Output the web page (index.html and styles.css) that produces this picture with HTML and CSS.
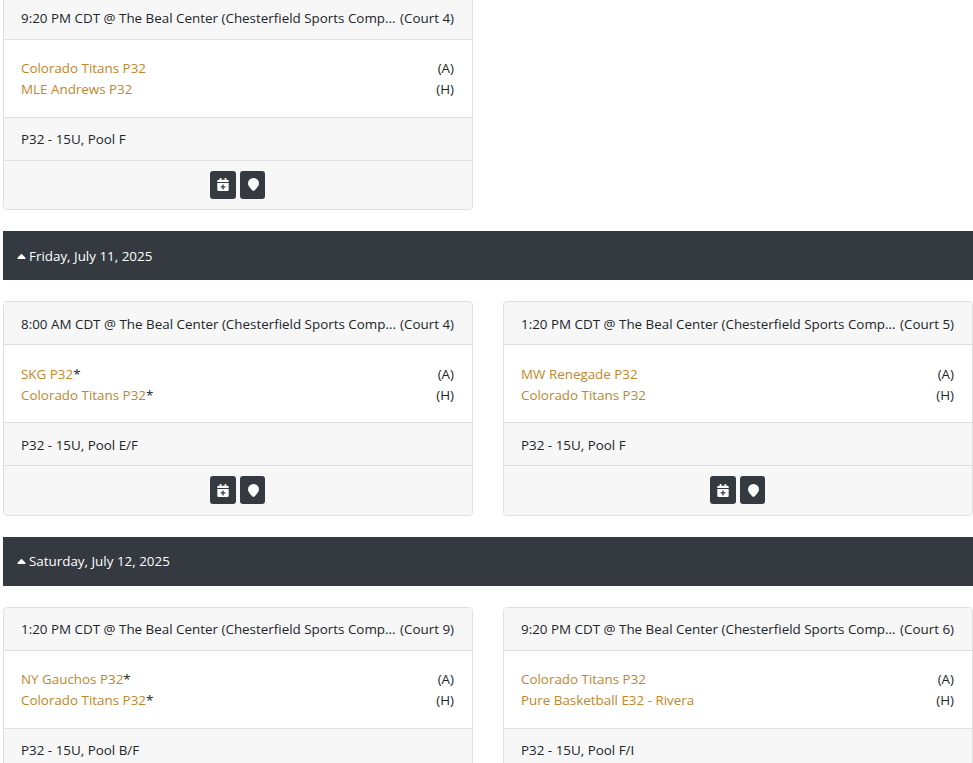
FILE: index.html
```html
<!DOCTYPE html>
<html lang="en">
<head>
<meta charset="utf-8">
<title>Schedule</title>
<link rel="stylesheet" href="styles.css">
</head>
<body>
<svg class="sprites" width="0" height="0" aria-hidden="true">
  <symbol id="cal" viewBox="0 0 14 16">
    <path d="M3 0h2v2h4V0h2v2h1.500A1.500 1.500 0 0 1 14 3.500V5H0V3.500A1.500 1.500 0 0 1 1.500 2H3z"/>
    <path fill-rule="evenodd" d="M0 6h14v8.500a1.500 1.500 0 0 1-1.500 1.500h-11A1.500 1.500 0 0 1 0 14.500zM6.200 8v2.200H4v1.600h2.200V14h1.600v-2.200H10v-1.600H7.800V8z"/>
  </symbol>
  <symbol id="pin" viewBox="0 0 11 13">
    <path d="M5.500 0A5.500 5.500 0 0 1 11 5.500c0 2.600-3.300 5.900-5 7.300a.8.8 0 0 1-1 0C3.300 11.400 0 8.100 0 5.500A5.500 5.500 0 0 1 5.500 0z"/>
  </symbol>
  <symbol id="caret" viewBox="0 0 10 6">
    <path d="M4.300.4.300 4.400C-.2 5 .1 6 1 6h8c.9 0 1.200-1 .7-1.600l-4-4a1 1 0 0 0-1.400 0z"/>
  </symbol>
</svg>
<main class="page">
  <div class="games">
    <article class="card">
      <header class="card-head"><span>9:20 PM CDT @ The Beal Center (Chesterfield Sports Comp...</span><span>(Court 4)</span></header>
      <div class="card-body">
        <div class="team"><a class="team-link">Colorado Titans P32</a><span>(A)</span></div>
        <div class="team"><a class="team-link">MLE Andrews P32</a><span>(H)</span></div>
      </div>
      <div class="card-foot">P32 - 15U, Pool F</div>
      <div class="card-actions">
        <button class="btn"><svg class="ico"><use href="#cal"/></svg></button>
        <button class="btn btn-pin"><svg class="ico ico-pin"><use href="#pin"/></svg></button>
      </div>
    </article>
  </div>

  <h2 class="day"><svg class="caret"><use href="#caret"/></svg><span>Friday, July 11, 2025</span></h2>
  <div class="games">
    <article class="card">
      <header class="card-head"><span>8:00 AM CDT @ The Beal Center (Chesterfield Sports Comp...</span><span>(Court 4)</span></header>
      <div class="card-body">
        <div class="team"><span><a class="team-link">SKG P32</a>*</span><span>(A)</span></div>
        <div class="team"><span><a class="team-link">Colorado Titans P32</a>*</span><span>(H)</span></div>
      </div>
      <div class="card-foot">P32 - 15U, Pool E/F</div>
      <div class="card-actions">
        <button class="btn"><svg class="ico"><use href="#cal"/></svg></button>
        <button class="btn btn-pin"><svg class="ico ico-pin"><use href="#pin"/></svg></button>
      </div>
    </article>
    <article class="card">
      <header class="card-head"><span>1:20 PM CDT @ The Beal Center (Chesterfield Sports Comp...</span><span>(Court 5)</span></header>
      <div class="card-body">
        <div class="team"><a class="team-link">MW Renegade P32</a><span>(A)</span></div>
        <div class="team"><a class="team-link">Colorado Titans P32</a><span>(H)</span></div>
      </div>
      <div class="card-foot">P32 - 15U, Pool F</div>
      <div class="card-actions">
        <button class="btn"><svg class="ico"><use href="#cal"/></svg></button>
        <button class="btn btn-pin"><svg class="ico ico-pin"><use href="#pin"/></svg></button>
      </div>
    </article>
  </div>

  <h2 class="day"><svg class="caret"><use href="#caret"/></svg><span>Saturday, July 12, 2025</span></h2>
  <div class="games">
    <article class="card">
      <header class="card-head"><span>1:20 PM CDT @ The Beal Center (Chesterfield Sports Comp...</span><span>(Court 9)</span></header>
      <div class="card-body">
        <div class="team"><span><a class="team-link">NY Gauchos P32</a>*</span><span>(A)</span></div>
        <div class="team"><span><a class="team-link">Colorado Titans P32</a>*</span><span>(H)</span></div>
      </div>
      <div class="card-foot">P32 - 15U, Pool B/F</div>
      <div class="card-actions">
        <button class="btn"><svg class="ico"><use href="#cal"/></svg></button>
        <button class="btn btn-pin"><svg class="ico ico-pin"><use href="#pin"/></svg></button>
      </div>
    </article>
    <article class="card">
      <header class="card-head"><span>9:20 PM CDT @ The Beal Center (Chesterfield Sports Comp...</span><span>(Court 6)</span></header>
      <div class="card-body">
        <div class="team"><a class="team-link">Colorado Titans P32</a><span>(A)</span></div>
        <div class="team"><a class="team-link">Pure Basketball E32 - Rivera</a><span>(H)</span></div>
      </div>
      <div class="card-foot">P32 - 15U, Pool F/I</div>
      <div class="card-actions">
        <button class="btn"><svg class="ico"><use href="#cal"/></svg></button>
        <button class="btn btn-pin"><svg class="ico ico-pin"><use href="#pin"/></svg></button>
      </div>
    </article>
  </div>
</main>
</body>
</html>
```
FILE: styles.css
```css
* { box-sizing: border-box; }
html, body { margin: 0; height: 763px; overflow: hidden; background: #fff; }
body {
  font-family: "Open Sans", "Noto Sans", sans-serif;
  font-size: 13.4px;
  line-height: 21px;
  color: #212529;
}
.sprites { position: absolute; }
.page { margin-top: -4.5px; padding-left: 3px; }
.games { display: grid; grid-template-columns: 470px 470px; column-gap: 30px; }
.card { border: 1px solid #dfdfdf; border-radius: 4px; background: #fff; overflow: hidden; }
.card-head {
  display: flex;
  justify-content: space-between;
  height: 43px;
  padding: 11.5px 18px 9.5px 17px;
  background: #f7f7f7;
  border-bottom: 1px solid #dfdfdf;
  white-space: nowrap;
}
.card-body { height: 78px; padding: 18.5px 18px 16.5px 17px; border-bottom: 1px solid #dfdfdf; }
.team { display: flex; justify-content: space-between; }
.team-link { color: #c2862a; }
.card-foot { height: 43px; padding: 11.5px 17px 10.5px; background: #f7f7f7; border-bottom: 1px solid #dfdfdf; }
.card-actions { display: flex; justify-content: center; gap: 4px; height: 48.5px; padding: 10px 11px 10px 10px; background: #f7f7f7; }
.btn {
  display: flex; align-items: center; justify-content: center;
  width: 26px; height: 28px; padding: 0; border: 0; border-radius: 3px;
  background: #343a40; color: #fff;
}
.btn-pin { width: 25px; }
.ico { width: 12px; height: 13px; fill: currentColor; }
.ico-pin { width: 11px; margin-left: 1px; }
.day {
  display: flex;
  align-items: center;
  height: 49px;
  margin: 21px 0;
  padding: 1.8px 0 0 13.500px;
  background: #343a40;
  color: #fff;
  font-size: 13.4px;
  line-height: 21px;
  font-weight: 400;
}
.caret { width: 9px; height: 5px; margin-right: 3.500px; fill: #fff; }
```
